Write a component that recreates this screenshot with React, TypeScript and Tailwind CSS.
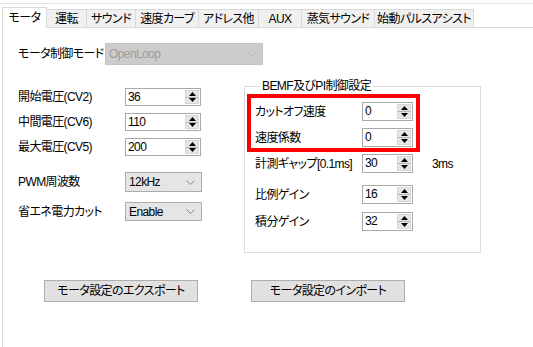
import React from 'react';
import clsx from 'clsx';

const tabs = [
  { label: '運転', w: 'w-[40px]' },
  { label: 'サウンド', w: 'w-[49px]' },
  { label: '速度カーブ', w: 'w-[63px]' },
  { label: 'アドレス他', w: 'w-[60px]' },
  { label: 'AUX', w: 'w-[43px]' },
  { label: '蒸気サウンド', w: 'w-[73px]' },
  { label: '始動パルスアシスト', w: 'w-[99px]' },
];

function Spin({ value, className }: { value: string; className: string }) {
  return (
    <div className={clsx('flex h-[19px] shrink-0 border border-[#a9a9a9] bg-white', className)}>
      <span className="flex-1 pl-[2px] leading-[17px]">{value}</span>
      <div className="my-px mr-px flex w-[14px] flex-col border border-[#d6d6d6] bg-[#e6e6e6]">
        <div className="flex flex-1 items-center justify-center border-b border-[#b5b5b5]">
          <svg width="7" height="4" viewBox="0 0 7 4">
            <polygon points="3.5,0 7,4 0,4" fill="#000" />
          </svg>
        </div>
        <div className="flex flex-1 items-center justify-center">
          <svg width="7" height="4" viewBox="0 0 7 4">
            <polygon points="0,0 7,0 3.5,4" fill="#000" />
          </svg>
        </div>
      </div>
    </div>
  );
}

function Combo({ value, className, disabled }: { value: string; className: string; disabled?: boolean }) {
  return (
    <div
      className={clsx(
        'flex shrink-0 items-center justify-between border pl-[3px] pr-[6px]',
        disabled ? 'border-[#c4c4c4] bg-[#cccccc] text-[#9d9d9d]' : 'border-[#adadad] bg-[#e5e5e5]',
        className,
      )}
    >
      <span>{value}</span>
      <svg width="9" height="5" viewBox="0 0 9 5">
        <polyline points="0.5,0.5 4.5,4.5 8.5,0.5" fill="none" stroke={disabled ? '#b4b4b4' : '#8a8a8a'} strokeWidth="1" />
      </svg>
    </div>
  );
}

export default function App() {
  return (
    <div
      className="flex h-[347px] w-[533px] flex-col overflow-hidden whitespace-nowrap bg-white text-[12px] leading-[14px] tracking-[-0.6px] text-black [font-feature-settings:'palt']"
      style={{ fontFamily: '"Liberation Sans", "Noto Sans CJK JP", sans-serif' }}
    >
      <div className="h-[3px]" />
      <div className="h-px bg-[#e3e3e3]" />

      {/* Tabs */}
      <div className="flex h-[23px] items-end pl-[2px]">
        <div className="relative z-10 -mb-px flex h-[21px] w-[45px] items-center justify-center border-x border-t border-[#d9d9d9] bg-white">
          モータ
        </div>
        {tabs.map((t) => (
          <div
            key={t.label}
            className={clsx('flex h-[18px] items-center justify-center border-t border-r border-[#d9d9d9] bg-[#f0f0f0]', t.w)}
          >
            {t.label}
          </div>
        ))}
      </div>

      {/* Panel */}
      <div className="ml-[2px] flex-1 border-l border-t border-[#d9d9d9] pl-[15px] pt-[15px]">
        <div className="flex h-[22px] items-center">
          <span className="w-[87px]">モータ制御モード</span>
          <Combo value="OpenLoop" className="h-[22px] w-[158px]" disabled />
        </div>

        <div className="mt-[14px] flex items-start">
          {/* Left column */}
          <div className="mt-[9px] w-[226px] shrink-0">
            <div className="flex h-[18px] items-center">
              <span className="w-[107px]">開始電圧(CV2)</span>
              <Spin value="36" className="!h-[18px] w-[76px]" />
            </div>
            <div className="mt-[7px] flex h-[18px] items-center">
              <span className="w-[107px]">中間電圧(CV6)</span>
              <Spin value="110" className="!h-[18px] w-[76px]" />
            </div>
            <div className="mt-[7px] flex h-[18px] items-center">
              <span className="w-[107px]">最大電圧(CV5)</span>
              <Spin value="200" className="!h-[18px] w-[76px]" />
            </div>
            <div className="mt-[16px] flex h-[20px] items-center">
              <span className="w-[107px]">PWM周波数</span>
              <Combo value="12kHz" className="h-[20px] w-[77px]" />
            </div>
            <div className="mt-[10px] flex h-[19px] items-center">
              <span className="w-[107px]">省エネ電力カット</span>
              <Combo value="Enable" className="h-[19px] w-[77px]" />
            </div>
          </div>

          {/* BEMF group */}
          <div className="relative shrink-0">
            <fieldset className="h-[174px] w-[237px] border border-[#dcdcdc] pl-[10px] pt-[9px]">
              <legend className="ml-[5px] px-[2px] leading-[14px]">BEMF及びPI制御設定</legend>
              <div className="flex h-[19px] items-center">
                <span className="w-[107px]">カットオフ速度</span>
                <Spin value="0" className="w-[51px]" />
              </div>
              <div className="mt-[7px] flex h-[19px] items-center">
                <span className="w-[107px]">速度係数</span>
                <Spin value="0" className="w-[51px]" />
              </div>
              <div className="mt-[7px] flex h-[19px] items-center">
                <span className="w-[107px]">計測ギャップ[0.1ms]</span>
                <Spin value="30" className="w-[51px]" />
                <span className="ml-[19px]">3ms</span>
              </div>
              <div className="mt-[12px] flex h-[19px] items-center">
                <span className="w-[107px]">比例ゲイン</span>
                <Spin value="16" className="w-[51px]" />
              </div>
              <div className="mt-[8px] flex h-[19px] items-center">
                <span className="w-[107px]">積分ゲイン</span>
                <Spin value="32" className="w-[51px]" />
              </div>
            </fieldset>
            {/* highlight */}
            <div className="absolute left-[3px] top-[15px] h-[58px] w-[173px] border-4 border-[#ff0000]" />
          </div>
        </div>

        <div className="ml-[26px] mt-[27px] flex gap-[53px]">
          <button className="h-[22px] w-[154px] border border-[#adadad] bg-[#e1e1e1]">モータ設定のエクスポート</button>
          <button className="h-[22px] w-[154px] border border-[#adadad] bg-[#e1e1e1]">モータ設定のインポート</button>
        </div>
      </div>
    </div>
  );
}
